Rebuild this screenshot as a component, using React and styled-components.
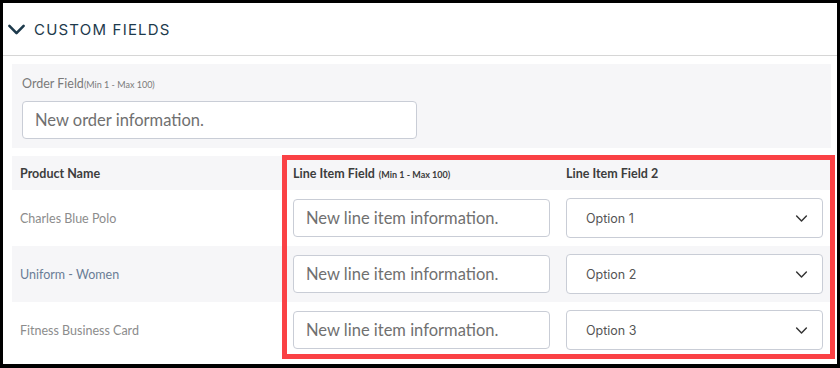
import React from 'react';
import styled, { createGlobalStyle } from 'styled-components';

const GlobalStyle = createGlobalStyle`
  html, body {
    margin: 0;
    padding: 0;
    background: #000;
  }
  body {
    font-family: "Lato", "Open Sans", sans-serif;
  }
`

const Page = styled.div`
  margin: 3px 3px 0 3px;
  height: 361px;
  background: #fff;
  overflow: hidden;
`

const Header = styled.div`
  height: 52px;
  display: flex;
  align-items: center;
  padding-left: 4px;
  border-bottom: 1px solid #d6d6d6;
`

const Title = styled.h2`
  margin: 0 0 0 8px;
  font-family: "Inter", "Liberation Sans", sans-serif;
  font-weight: 400;
  font-size: 15px;
  letter-spacing: 1.2px;
  color: #1d3a4c;
`

const Content = styled.div`
  padding: 8px 6px 0 9px;
  display: flex;
  flex-direction: column;
  gap: 8px;
`

const OrderPanel = styled.div`
  background: #f6f6f8;
  height: 84px;
  box-sizing: border-box;
  padding: 12px 10px 0 10px;
`

const Label = styled.div`
  font-size: 12.5px;
  color: #7a7a7a;
  line-height: 16px;
  margin-bottom: 8px;
`

const Small = styled.span`
  font-size: 9px;
  font-weight: ${p => (p.$bold ? 700 : 400)};
  margin-left: ${p => (p.$gap ? '4px' : '0')};
`

const TextInput = styled.input`
  box-sizing: border-box;
  width: ${p => p.$width || '100%'};
  height: 38px;
  border: 1px solid #c9cdd6;
  border-radius: 4px;
  background: #fff;
  padding: 0 12px;
  font-family: "Lato", "Open Sans", sans-serif;
  font-size: 16.5px;
  color: #333;
  outline: none;
  &::placeholder {
    color: #707070;
  }
`

const TableWrap = styled.div`
  position: relative;
`

const Row = styled.div`
  display: grid;
  grid-template-columns: 273px 273px 273px;
  align-items: center;
  height: ${p => (p.$head ? '34px' : '56px')};
  background: ${p => (p.$shade ? '#f6f6f8' : '#fff')};
`

const Cell = styled.div`
  padding: 0 8px;
  font-size: 12.5px;
  color: ${p => p.$color || '#8c8c8c'};
`

const HeadCell = styled(Cell)`
  font-weight: 700;
  color: #3d3d3d;
`

const SelectBox = styled.div`
  box-sizing: border-box;
  height: 40px;
  border: 1px solid #c9cdd6;
  border-radius: 4px;
  background: #fff;
  display: flex;
  align-items: center;
  justify-content: space-between;
  padding: 0 14px 0 19px;
  font-family: "Inter", "Liberation Sans", sans-serif;
  font-size: 12.5px;
  color: #555;
`

const Highlight = styled.div`
  position: absolute;
  left: 270px;
  top: -1px;
  width: 553px;
  height: 204px;
  box-sizing: border-box;
  border: 5px solid #fa4145;
  pointer-events: none;
`

const Chevron = ({ size = 16, stroke = 2, color = '#1d3a4c' }) => (
  <svg width={size} height={size} viewBox="0 0 16 16" fill="none">
    <path d="M2 5 L8 11 L14 5" stroke={color} strokeWidth={stroke} strokeLinecap="round" strokeLinejoin="round" />
  </svg>
)

const rows = [
  { name: 'Charles Blue Polo', option: 'Option 1' },
  { name: 'Uniform - Women', option: 'Option 2', color: '#6a7d96' },
  { name: 'Fitness Business Card', option: 'Option 3' },
]

export default function App() {
  return (
    <>
      <GlobalStyle />
      <Page>
        <Header>
          <Chevron size={19} stroke={2.2} />
          <Title>CUSTOM FIELDS</Title>
        </Header>
        <Content>
          <OrderPanel>
            <Label>
              Order Field<Small>(Min 1 - Max 100)</Small>
            </Label>
            <TextInput $width="395px" placeholder="New order information." />
          </OrderPanel>
          <TableWrap>
            <Row $head $shade>
              <HeadCell>Product Name</HeadCell>
              <HeadCell>
                Line Item Field<Small $bold $gap>(Min 1 - Max 100)</Small>
              </HeadCell>
              <HeadCell>Line Item Field 2</HeadCell>
            </Row>
            {rows.map((r, i) => (
              <Row key={r.name} $shade={i % 2 === 1}>
                <Cell $color={r.color}>{r.name}</Cell>
                <Cell>
                  <TextInput placeholder="New line item information." />
                </Cell>
                <Cell>
                  <SelectBox>
                    {r.option}
                    <Chevron size={13} stroke={1.8} color="#333" />
                  </SelectBox>
                </Cell>
              </Row>
            ))}
            <Highlight />
          </TableWrap>
        </Content>
      </Page>
    </>
  )
}
